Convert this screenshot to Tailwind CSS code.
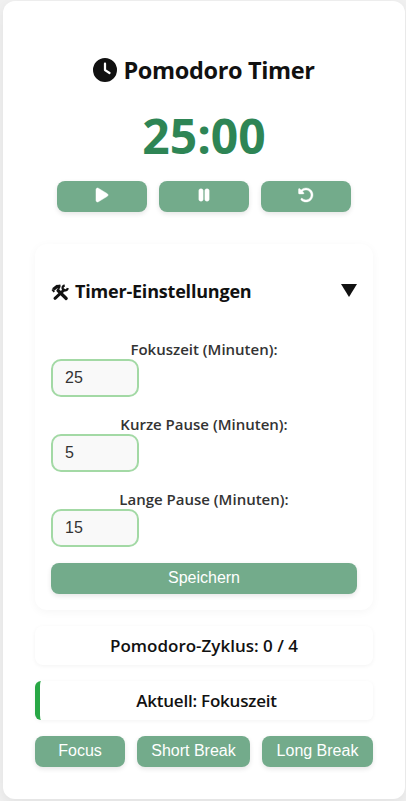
<!DOCTYPE html>
<html lang="de">
<head>
<meta charset="utf-8">
<title>Pomodoro Timer</title>
<script src="https://cdn.jsdelivr.net/npm/@tailwindcss/browser@4"></script>
</head>
<body class="h-[801px] overflow-hidden bg-[#f0f0f0] pl-[3px] pt-px font-['Open_Sans','Noto_Sans',sans-serif] text-[#111]">
<main class="flex h-[798px] w-[402px] flex-col rounded-xl bg-white px-8 pt-[52px] shadow-[0_4px_12px_rgba(0,0,0,0.06)]">
  <h1 class="flex h-[34px] items-center justify-center gap-[6px] whitespace-nowrap text-[23.5px] font-bold tracking-[-0.35px]">
    <svg class="size-6" viewBox="0 0 512 512" fill="currentColor"><path d="M256 0a256 256 0 1 1 0 512A256 256 0 1 1 256 0zM232 120V256c0 8 4 15.500 10.700 20l96 64c11 7.400 25.900 4.400 33.300-6.700s4.400-25.900-6.700-33.300L280 243.200V120c0-13.300-10.700-24-24-24s-24 10.700-24 24z"/></svg>
    <span class="pt-0.5">Pomodoro Timer</span>
  </h1>
  <div class="mt-4 flex h-16 items-center justify-center pt-0.5 text-5xl font-bold text-[#2e8555]"><span>25:00</span></div>
  <div class="mt-[14px] flex justify-center gap-3">
    <button class="flex h-[31px] w-[90px] items-center justify-center rounded-lg bg-[#73ab8b] pb-[3px] text-white shadow-[0_2px_5px_rgba(0,0,0,0.1)]"><svg class="h-4 w-[14px]" viewBox="0 0 384 512" fill="currentColor"><path d="M73 39c-14.800-9.100-33.400-9.400-48.500-.9S0 62.600 0 80V432c0 17.400 9.400 33.400 24.500 41.900s33.700 8.100 48.500-.9L361 297c14.300-8.700 23-24.200 23-41s-8.700-32.200-23-41L73 39z" stroke="currentColor" stroke-width="16"/></svg></button>
    <button class="flex h-[31px] w-[90px] items-center justify-center rounded-lg bg-[#73ab8b] pb-[3px] text-white shadow-[0_2px_5px_rgba(0,0,0,0.1)]"><svg class="h-4 w-[12px]" viewBox="0 0 320 512" fill="currentColor"><path d="M48 64C21.500 64 0 85.500 0 112V400c0 26.500 21.500 48 48 48H80c26.500 0 48-21.500 48-48V112c0-26.500-21.500-48-48-48H48zm192 0c-26.500 0-48 21.500-48 48V400c0 26.500 21.500 48 48 48h32c26.500 0 48-21.500 48-48V112c0-26.500-21.500-48-48-48H240z" stroke="currentColor" stroke-width="24"/></svg></button>
    <button class="flex h-[31px] w-[90px] items-center justify-center rounded-lg bg-[#73ab8b] pb-[3px] text-white shadow-[0_2px_5px_rgba(0,0,0,0.1)]"><svg class="size-4" viewBox="0 0 512 512" fill="currentColor"><path d="M48.500 224H40c-13.300 0-24-10.700-24-24V72c0-9.700 5.800-18.500 14.800-22.200s19.300-1.700 26.200 5.200L98.600 96.600c87.600-86.500 228.700-86.200 315.800 1c87.500 87.500 87.500 229.300 0 316.800s-229.300 87.500-316.800 0c-12.500-12.500-12.500-32.800 0-45.300s32.800-12.500 45.300 0c62.500 62.500 163.800 62.500 226.300 0s62.500-163.800 0-226.300c-62.200-62.200-162.700-62.500-225.300-1L185 183c6.900 6.900 8.900 17.200 5.200 26.200s-12.500 14.800-22.200 14.800H48.500z" stroke="currentColor" stroke-width="12"/></svg></button>
  </div>

  <section class="mt-8 flex h-[366px] flex-col rounded-xl bg-white px-4 pt-8 shadow-[0_2px_10px_rgba(0,0,0,0.04)]">
    <div class="flex h-[30px] items-center justify-between">
      <h2 class="flex items-center gap-[6px] whitespace-nowrap text-lg font-bold tracking-[-0.2px]">
        <svg class="mt-[3px] h-[17px] w-[18px]" viewBox="0 0 18 17" fill="none" stroke="currentColor"><path d="M7 6.500 15.200 14.500" stroke-width="3.200" stroke-linecap="round"/><path d="M2.200 5.500 6 2.400 9 4" stroke-width="3.200" stroke-linejoin="round"/><path d="M1.200 5.500 3.200 8M6.500 2l3-.6" stroke-width="1.800"/><path d="M4 14.300 13 6" stroke-width="3" stroke-linecap="round"/><path d="M13.700 1.300c-2.400.7-2.600 2.700-1.600 4.200 1.500 1.500 4 1.200 4.800-1.300" stroke-width="2.300"/></svg>
        <span>Timer-Einstellungen</span>
      </h2>
      <svg class="mb-[2px] h-[13px] w-4" viewBox="0 0 16 13" fill="currentColor"><path d="M0 0H16L8 13z"/></svg>
    </div>
    <div class="mt-[33px] flex flex-col gap-[17px] text-[15px] font-semibold text-[#333]">
      <div><label class="block h-5 whitespace-nowrap text-center leading-5"><span>Fokuszeit (Minuten):</span></label><input class="block h-[38px] w-[88px] rounded-[10px] border-2 border-[#a3d9a5] bg-[#f9f9f9] px-3 font-['Liberation_Sans',sans-serif] text-base font-normal" value="25"></div>
      <div><label class="block h-5 whitespace-nowrap text-center leading-5"><span>Kurze Pause (Minuten):</span></label><input class="block h-[38px] w-[88px] rounded-[10px] border-2 border-[#a3d9a5] bg-[#f9f9f9] px-3 font-['Liberation_Sans',sans-serif] text-base font-normal" value="5"></div>
      <div><label class="block h-5 whitespace-nowrap text-center leading-5"><span>Lange Pause (Minuten):</span></label><input class="block h-[38px] w-[88px] rounded-[10px] border-2 border-[#a3d9a5] bg-[#f9f9f9] px-3 font-['Liberation_Sans',sans-serif] text-base font-normal" value="15"></div>
    </div>
    <button class="mt-4 h-[31px] rounded-lg bg-[#73ab8b] pb-[2px] font-['Liberation_Sans',sans-serif] text-base leading-none text-white shadow-[0_2px_5px_rgba(0,0,0,0.1)]">Speichern</button>
  </section>

  <div class="mt-4 flex h-[39px] items-center justify-center whitespace-nowrap rounded-lg text-[17px] font-semibold shadow-[0_1px_4px_rgba(0,0,0,0.05)]"><span>Pomodoro-Zyklus: 0 / 4</span></div>
  <div class="mt-4 flex h-[39px] items-center justify-center whitespace-nowrap rounded-md border-l-[5px] border-[#28a745] text-[17px] font-semibold tracking-[-0.22px] shadow-[0_1px_4px_rgba(0,0,0,0.05)]"><span>Aktuell: Fokuszeit</span></div>
  <div class="mt-4 flex gap-3 whitespace-nowrap font-['Liberation_Sans',sans-serif] text-base leading-none text-white">
    <button class="h-[31px] w-[90px] rounded-lg bg-[#73ab8b] pb-[2px] shadow-[0_2px_5px_rgba(0,0,0,0.1)]">Focus</button>
    <button class="h-[31px] w-[113px] rounded-lg bg-[#73ab8b] pb-[2px] shadow-[0_2px_5px_rgba(0,0,0,0.1)]">Short Break</button>
    <button class="h-[31px] w-[111px] rounded-lg bg-[#73ab8b] pb-[2px] shadow-[0_2px_5px_rgba(0,0,0,0.1)]">Long Break</button>
  </div>
</main>
</body>
</html>
